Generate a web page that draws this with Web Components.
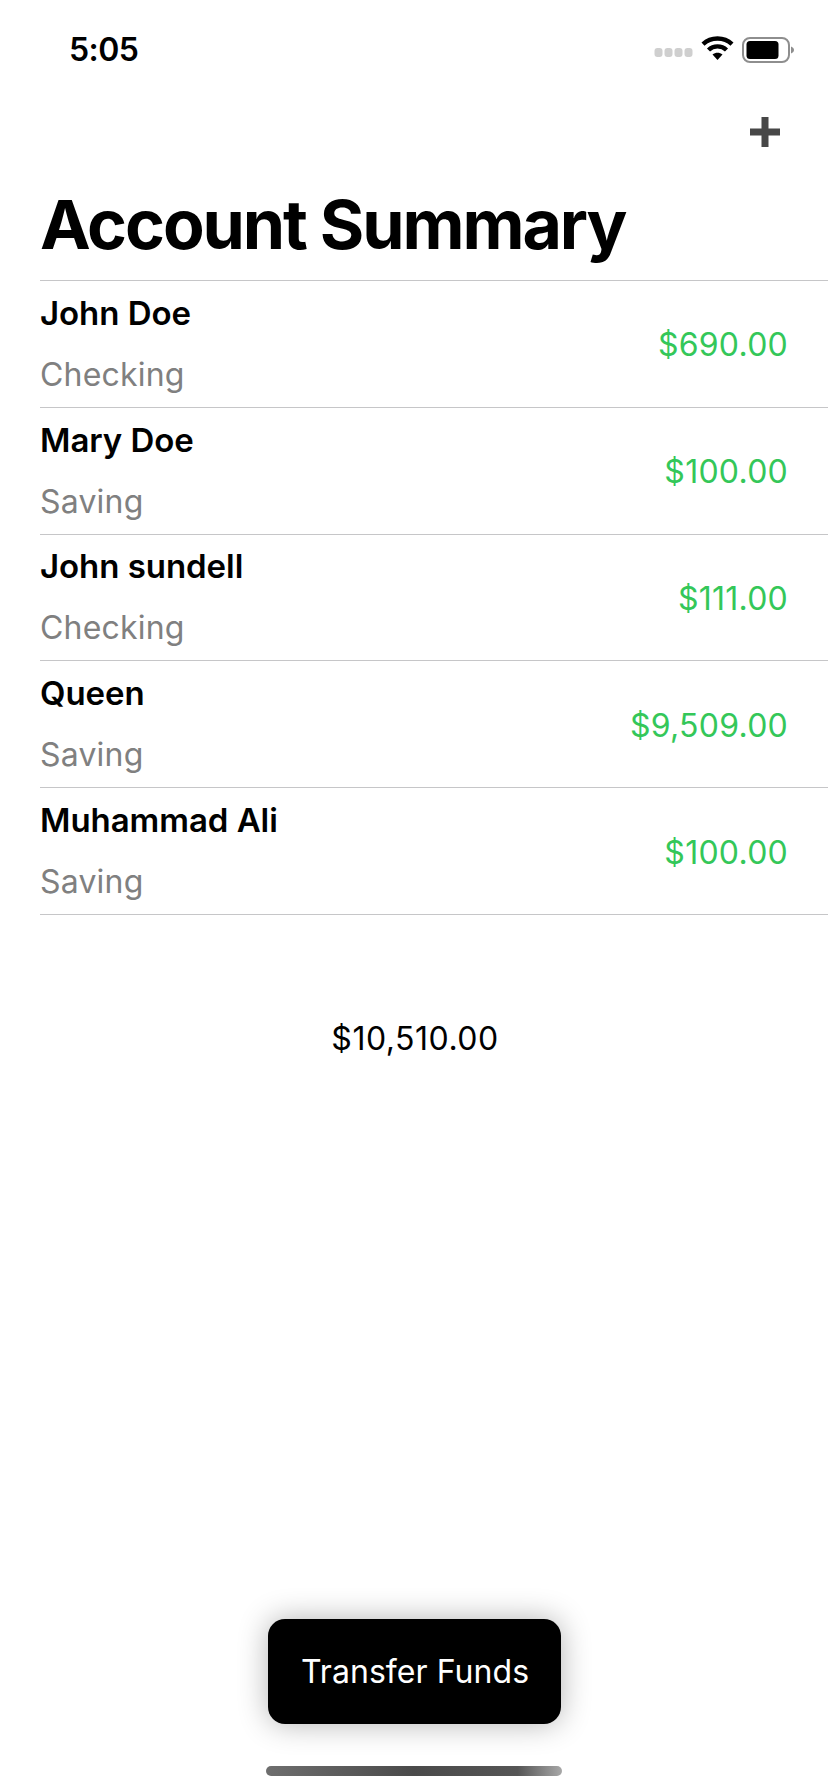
<!DOCTYPE html>
<html>
<head>
<meta charset="utf-8">
<title>Account Summary</title>
<style>
  html, body { margin: 0; background: #fff; }
  body { font-family: Inter, "Liberation Sans", sans-serif; }
</style>
</head>
<body>
<account-screen>
  <status-bar time="5:05"></status-bar>
  <nav-bar></nav-bar>
  <large-title>Account Summary</large-title>
  <account-row name="John Doe" type="Checking" amount="$690.00"></account-row>
  <account-row name="Mary Doe" type="Saving" amount="$100.00"></account-row>
  <account-row name="John sundell" type="Checking" amount="$111.00"></account-row>
  <account-row name="Queen" type="Saving" amount="$9,509.00"></account-row>
  <account-row name="Muhammad Ali" type="Saving" amount="$100.00"></account-row>
  <total-label>$10,510.00</total-label>
  <transfer-button>Transfer Funds</transfer-button>
  <home-bar></home-bar>
</account-screen>

<script>
class AccountScreen extends HTMLElement {
  constructor() {
    super();
    this.attachShadow({ mode: "open" });
    this.shadowRoot.innerHTML = `
      <style>
        :host { display: flex; flex-direction: column; width: 828px; height: 1792px; overflow: hidden; background: #fff; }
      </style>
      <slot></slot>
    `;
  }
}

class StatusBar extends HTMLElement {
  constructor() {
    super();
    this.attachShadow({ mode: "open" });
    this.shadowRoot.innerHTML = `
      <style>
        :host { display: flex; align-items: center; justify-content: space-between; height: 100px; box-sizing: border-box; padding: 0 34px 0 69px; flex: none; }
        .time { font-size: 32px; font-weight: 600; color: #000; letter-spacing: -.6px; position: relative; top: -1px; }
        .icons { display: flex; align-items: center; }
        svg { display: block; }
      </style>
      <span class="time"></span>
      <div class="icons">
        <svg width="140" height="30" viewBox="-4 0 140 30">
          <g fill="#cfcfcf">
            <rect x="-3.500" y="13" width="8" height="9" rx="3"/>
            <rect x="6.500" y="13" width="8" height="9" rx="3"/>
            <rect x="16.500" y="13" width="8" height="9" rx="3"/>
            <rect x="26.500" y="13" width="8" height="9" rx="3"/>
          </g>
          <g fill="none" stroke="#000" stroke-width="4.4">
            <path d="M45 9.2 C53 1.6 66 1.6 74 9.2"/>
            <path d="M50.5 15 C55.5 10.2 63.5 10.2 68.5 15"/>
          </g>
          <path d="M54.5 19.6 C57.5 17 61.5 17 64.5 19.6 L59.5 25 Z" fill="#000"/>
          <rect x="85" y="3" width="46" height="24" rx="7" fill="none" stroke="#8e8e8e" stroke-width="2"/>
          <rect x="88.5" y="6" width="32" height="18" rx="3.5" fill="#000"/>
          <path d="M133 11.5 C135 12.3 136 13.5 136 15 C136 16.5 135 17.7 133 18.5 Z" fill="#8e8e8e"/>
        </svg>
      </div>
    `;
    this.shadowRoot.querySelector(".time").textContent = this.getAttribute("time");
  }
}

class NavBar extends HTMLElement {
  constructor() {
    super();
    this.attachShadow({ mode: "open" });
    this.shadowRoot.innerHTML = `
      <style>
        :host { display: flex; justify-content: flex-end; height: 82px; box-sizing: border-box; padding: 17px 48px 0 0; flex: none; }
        svg { display: block; }
      </style>
      <svg width="30" height="30" viewBox="0 0 30 30"><path d="M11.5 0h7v11.500H30v7H18.500V30h-7V18.500H0v-7h11.500z" fill="#474747"/></svg>
    `;
  }
}

class LargeTitle extends HTMLElement {
  constructor() {
    super();
    this.attachShadow({ mode: "open" });
    this.shadowRoot.innerHTML = `
      <style>
        :host { display: block; height: 98px; box-sizing: border-box; padding-left: 40px; font-size: 68px; line-height: 84px; font-weight: 700; letter-spacing: -2.1px; color: #000; flex: none; }
      </style>
      <slot></slot>
    `;
  }
}

class AccountRow extends HTMLElement {
  constructor() {
    super();
    this.attachShadow({ mode: "open" });
    this.shadowRoot.innerHTML = `
      <style>
        :host { display: block; margin-left: 40px; flex: none; }
        .row { display: flex; align-items: center; justify-content: space-between; height: 125.8px; padding-right: 40px; border-top: 1px solid #c6c6c8; }
        .row.last { border-bottom: 1px solid #c6c6c8; }
        .left { display: flex; flex-direction: column; gap: 22px; }
        .name { font-size: 33px; line-height: 39px; font-weight: 600; color: #000; letter-spacing: -.05px; }
        .type { font-size: 32px; line-height: 39px; color: #808080; letter-spacing: .2px; }
        .amount { font-size: 32px; color: #34c759; letter-spacing: .25px; position: relative; top: 1px; }
      </style>
      <div class="row">
        <div class="left"><div class="name"></div><div class="type"></div></div>
        <div class="amount"></div>
      </div>
    `;
    const s = this.shadowRoot;
    s.querySelector(".name").textContent = this.getAttribute("name");
    s.querySelector(".type").textContent = this.getAttribute("type");
    s.querySelector(".amount").textContent = this.getAttribute("amount");
  }
  connectedCallback() {
    if (!this.nextElementSibling || this.nextElementSibling.localName !== "account-row") {
      this.shadowRoot.querySelector(".row").classList.add("last");
    }
  }
}

class TotalLabel extends HTMLElement {
  constructor() {
    super();
    this.attachShadow({ mode: "open" });
    this.shadowRoot.innerHTML = `
      <style>
        :host { display: block; margin-top: 104px; padding-left: 2px; text-align: center; font-size: 32px; line-height: 40px; color: #000; letter-spacing: .5px; flex: none; }
      </style>
      <slot></slot>
    `;
  }
}

class TransferButton extends HTMLElement {
  constructor() {
    super();
    this.attachShadow({ mode: "open" });
    this.shadowRoot.innerHTML = `
      <style>
        :host { display: block; align-self: center; margin-top: auto; margin-bottom: 42px; flex: none; }
        button { display: block; width: 293px; height: 105px; padding: 0 0 0 2px; border: 0; border-radius: 17px; background: #000; color: #fff; font: 400 32px Inter, "Liberation Sans", sans-serif; letter-spacing: .06px; box-shadow: 0 0 30px rgba(0,0,0,.3); }
      </style>
      <button><slot></slot></button>
    `;
  }
}

class HomeBar extends HTMLElement {
  constructor() {
    super();
    this.attachShadow({ mode: "open" });
    this.shadowRoot.innerHTML = `
      <style>
        :host { display: block; align-self: center; width: 296px; height: 10px; margin-bottom: 16px; border-radius: 5px; flex: none; background: linear-gradient(90deg, #6e6e6e, #4a4a4a 50%, #555 85%, #a8a8a8); }
      </style>
    `;
  }
}

customElements.define("account-screen", AccountScreen);
customElements.define("status-bar", StatusBar);
customElements.define("nav-bar", NavBar);
customElements.define("large-title", LargeTitle);
customElements.define("account-row", AccountRow);
customElements.define("total-label", TotalLabel);
customElements.define("transfer-button", TransferButton);
customElements.define("home-bar", HomeBar);
</script>
</body>
</html>
